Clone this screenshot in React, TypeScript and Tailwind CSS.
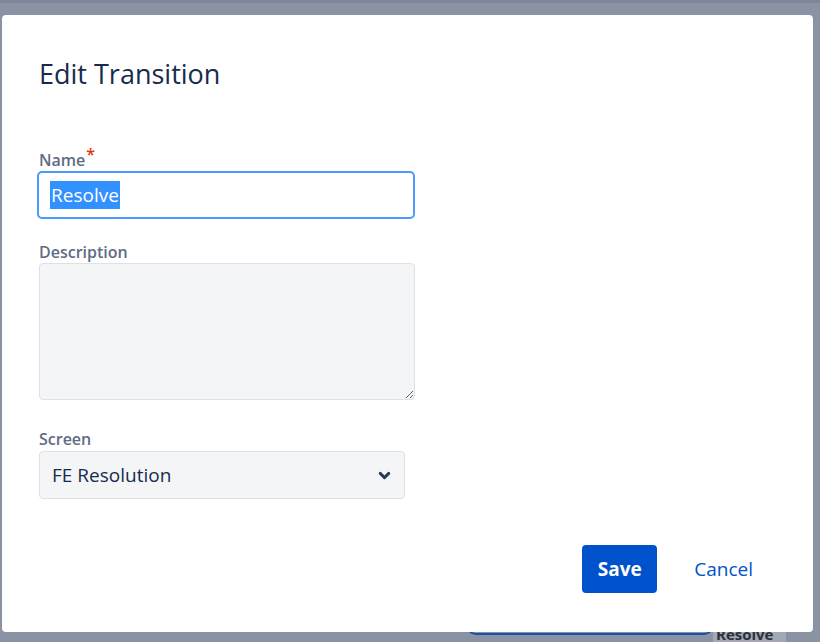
import { ChevronDown } from "lucide-react";

const font = { fontFamily: '"Open Sans", "Noto Sans", sans-serif' };

export default function App() {
  return (
    <div
      className="relative h-[642px] w-full overflow-hidden bg-[#8a93a4]"
      style={font}
    >
      {/* page content peeking below the overlay */}
      <div className="absolute left-[466px] top-[600px] h-[35px] w-[248px] rounded-[10px] border-2 border-[#1d4fa8]" />
      <div className="absolute left-[713px] top-[624px] h-[20px] w-[73px] bg-[#a3a9b4] px-[3px] text-[15px] font-bold leading-[20px] text-[#2a303b]">
        Resolve
      </div>
      <div className="absolute left-0 top-0 h-[3px] w-full bg-[#7e8797]" />

      <div className="relative pl-[2px] pt-[15px]">
        <div className="flex h-[617px] w-[811px] flex-col rounded-[4px] bg-white pl-[37px] pr-[27px]">
          <h1 className="mt-[41px] text-[27px] leading-[36px] text-[#172b4d]">
            Edit Transition
          </h1>

          <label className="mt-[58px] block text-[16px] font-semibold leading-[20px] text-[#5e6c84]">
            Name<span className="relative -top-[6px] ml-[1px] text-[#de350b]">*</span>
          </label>
          <div className="-ml-[2px] mt-[1px] flex h-[48px] w-[378px] items-center rounded-[5px] border-2 border-[#4c9aff] bg-white pl-[11px]">
            <span className="bg-[#3390ff] px-[1px] text-[19px] leading-[28px] text-white">Resolve</span>
          </div>

          <label className="mt-[23px] block text-[16px] font-semibold leading-[20px] text-[#5e6c84]">
            Description
          </label>
          <textarea
            className="mt-[1px] h-[137px] w-[376px] rounded-[4px] border border-[#dfe1e6] bg-[#f4f5f7] outline-none"
            style={font}
          />

          <label className="mt-[29px] block text-[16px] font-semibold leading-[20px] text-[#5e6c84]">
            Screen
          </label>
          <div className="mt-[2px] flex h-[48px] w-[366px] items-center justify-between rounded-[4px] border border-[#dfe1e6] bg-[#f4f5f7] pl-[12px] pr-[11px]">
            <span className="text-[19px] text-[#172b4d]">FE Resolution</span>
            <ChevronDown className="h-[17px] w-[17px] text-[#253858]" strokeWidth={4} />
          </div>

          <div className="mt-[46px] flex items-center justify-end gap-[4px]">
            <button className="h-[48px] w-[75px] rounded-[4px] bg-[#0052cc] text-[19px] font-bold text-white">
              Save
            </button>
            <button className="h-[48px] px-[33px] text-[19px] text-[#0052cc]">Cancel</button>
          </div>
        </div>
      </div>
    </div>
  );
}
